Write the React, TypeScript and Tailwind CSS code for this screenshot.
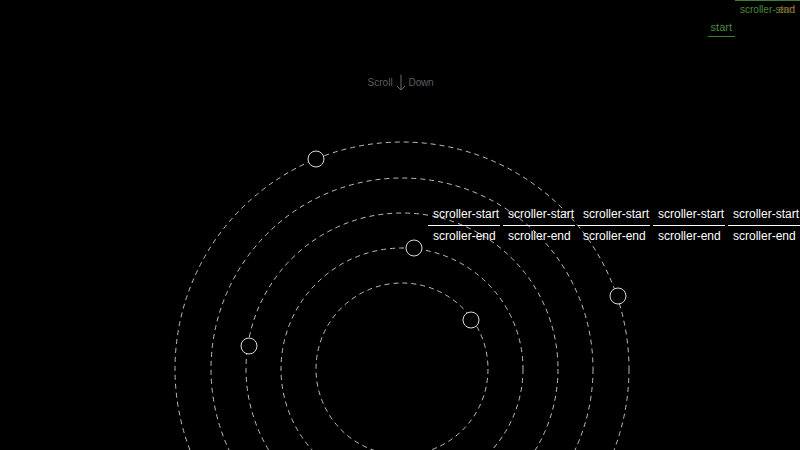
import React from "react";

const orbits = [86, 121, 156, 191, 227];

// planets: [radius, x offset, y offset] relative to the centre
const planets = [
  { r: 227, x: -86, y: -210 },
  { r: 227, x: 216, y: -73 },
  { r: 156, x: -153, y: -23 },
  { r: 121, x: 12, y: -121 },
  { r: 86, x: 69, y: -49 },
];

const CX = 241;
const CY = 278;

const ScrollHint = () => (
  <div className="flex items-center gap-[3px] pt-[74px] text-[10px] leading-[16px] text-[#5e5e5e] font-['Liberation_Sans',sans-serif]">
    <span>Scroll</span>
    <svg width="10" height="17" viewBox="0 0 10 17" fill="none" stroke="#6a6a6a" strokeWidth="1">
      <path d="M5 0.5 V16" />
      <path d="M1 12 L5 16 L9 12" />
    </svg>
    <span className="tracking-[-0.2px]">Down</span>
  </div>
);

const Orbits = () => (
  <svg width="480" height="360" viewBox="0 0 480 360" className="block shrink-0 overflow-visible">
    {orbits.map((r) => (
      <circle
        key={r}
        cx={CX}
        cy={CY}
        r={r}
        fill="none"
        stroke="#bdbdbd"
        strokeWidth="1"
        strokeDasharray="5 4"
      />
    ))}
    {planets.map((p, i) => (
      <circle key={i} cx={CX + p.x} cy={CY + p.y} r="8" fill="#000" stroke="#dcdcdc" strokeWidth="1" />
    ))}
  </svg>
);

const MarkerCell = () => (
  <div className="w-[72px] shrink-0 text-white">
    <div className="border-b border-white px-[5px] pt-[3px] pb-[4px] leading-[14px] whitespace-nowrap">scroller-start</div>
    <div className="px-[5px] pt-[3px] leading-[14px] whitespace-nowrap">scroller-end</div>
  </div>
);

export default function App() {
  return (
    <div className="relative h-[450px] w-[800px] overflow-hidden bg-black">
      <div className="flex flex-col items-center pl-[1px]">
        <ScrollHint />
        <Orbits />
      </div>

      {/* markers */}
      <div className="absolute left-[428px] top-[204px] flex gap-[3px] text-[12px] font-['Liberation_Sans',sans-serif]">
        <MarkerCell />
        <MarkerCell />
        <MarkerCell />
        <MarkerCell />
        <MarkerCell />
      </div>

      <div className="absolute right-0 top-0 flex items-start font-['Liberation_Sans',sans-serif]">
        <div className="mt-[20px] border-b border-[#3f7f33] px-[3px] pb-[2px] text-[11px] leading-[14px] text-[#4b8b3b]">start</div>
        <div className="relative border-t border-[#3f7f33] px-[5px] pt-[3px] text-[10px] leading-[12px] text-[#4b8b3b]">
          scroller-start
          <span className="absolute right-[5px] top-[3px] text-[#9a5a2a]">end</span>
        </div>
      </div>
    </div>
  );
}
